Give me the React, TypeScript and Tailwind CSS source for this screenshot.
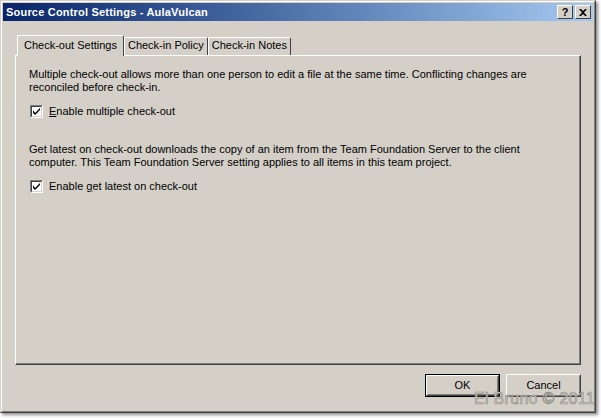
import React from 'react';

const font = { fontFamily: 'Tahoma, "Liberation Sans", Arial, sans-serif' };

function CheckBox() {
  return (
    <div className="w-[13px] h-[13px] border border-t-[#808080] border-l-[#808080] border-r-white border-b-white flex-shrink-0">
      <div className="w-full h-full bg-white border border-t-[#404040] border-l-[#404040] border-r-[#d4d0c8] border-b-[#d4d0c8] flex items-center justify-center">
        <svg width="9" height="9" viewBox="0 0 9 9">
          <path d="M1 3v3l2 2 5-5V1L3 6z" fill="#000" />
        </svg>
      </div>
    </div>
  );
}

function Tab({ label, active }: { label: string; active?: boolean }) {
  if (active) {
    return (
      <div className="relative z-10 -mb-px h-[21px] px-[6px] pt-[3px] bg-[#d4d0c8] border-t border-l border-t-white border-l-white border-r border-r-[#404040] rounded-tl-[2px] rounded-tr-[2px] text-black">
        {label}
      </div>
    );
  }
  return (
    <div className="h-[18px] mt-[3px] px-[3px] pt-[1px] border-t border-l border-t-white border-l-white border-r border-r-[#404040] rounded-tr-[2px] text-black">
      {label}
    </div>
  );
}

function Button({ label, def }: { label: string; def?: boolean }) {
  return (
    <div className={`w-[75px] h-[23px] ${def ? 'border border-black' : ''}`}>
      <div className="w-full h-full border border-t-white border-l-white border-r-[#404040] border-b-[#404040]">
        <div className="w-full h-full border border-t-[#d4d0c8] border-l-[#d4d0c8] border-r-[#808080] border-b-[#808080] flex items-center justify-center text-black">
          {label}
        </div>
      </div>
    </div>
  );
}

export default function App() {
  return (
    <div className="w-[601px] h-[418px] bg-white overflow-hidden text-[11px] leading-[13px]" style={font}>
      <div className="relative w-[596px] h-[413px] border border-t-[#d4d0c8] border-l-[#d4d0c8] border-r-[#404040] border-b-[#404040] shadow-[2px_2px_3px_rgba(0,0,0,0.45)]">
        <div className="w-full h-full border border-t-white border-l-white border-r-[#808080] border-b-[#808080] bg-[#d4d0c8] p-px flex flex-col">
          {/* Title bar */}
          <div className="h-[18px] flex items-center bg-gradient-to-r from-[#0a246a] to-[#a6caf0] pl-[3px] pr-[2px]">
            <span className="text-white font-bold flex-1 tracking-[0.2px]">Source Control Settings - AulaVulcan</span>
            <div className="flex gap-[2px]">
              <div className="w-[16px] h-[14px] bg-[#d4d0c8] border border-t-white border-l-white border-r-[#404040] border-b-[#404040] flex items-center justify-center font-bold text-[11px] leading-none">
                ?
              </div>
              <div className="w-[16px] h-[14px] bg-[#d4d0c8] border border-t-white border-l-white border-r-[#404040] border-b-[#404040] flex items-center justify-center">
                <svg width="8" height="7" viewBox="0 0 8 7">
                  <path d="M0 0h2l2 2 2-2h2L5 3.5 8 7H6L4 5 2 7H0l3-3.5z" fill="#000" />
                </svg>
              </div>
            </div>
          </div>

          {/* Body */}
          <div className="flex-1 flex flex-col pt-[13px] pl-[12px] pr-[12px]">
            <div className="flex items-end pl-[2px] h-[21px]">
              <Tab label="Check-out Settings" active />
              <Tab label="Check-in Policy" />
              <Tab label="Check-in Notes" />
            </div>
            <div className="h-[310px] border border-t-white border-l-white border-r-[#404040] border-b-[#404040]">
              <div className="w-full h-full border-r border-b border-r-[#808080] border-b-[#808080] pl-[13px] pr-[10px] pt-[12px] text-black">
                <p>
                  Multiple check-out allows more than one person to edit a file at the same time. Conflicting changes are
                  reconciled before check-in.
                </p>
                <div className="flex items-center gap-[6px] mt-[11px] pl-px">
                  <CheckBox />
                  <span>
                    <u>E</u>nable multiple check-out
                  </span>
                </div>
                <p className="mt-[25px]">
                  Get latest on check-out downloads the copy of an item from the Team Foundation Server to the client
                  computer. This Team Foundation Server setting applies to all items in this team project.
                </p>
                <div className="flex items-center gap-[6px] mt-[11px] pl-px">
                  <CheckBox />
                  <span>
                    Enable <u>g</u>et latest on check-out
                  </span>
                </div>
              </div>
            </div>
            <div className="flex justify-end gap-[6px] mt-[9px] relative">
              <Button label="OK" def />
              <Button label="Cancel" />
              <span
                className="absolute right-[-14px] top-[17px] text-[16px] leading-none text-[#d4d0c8] tracking-[0.3px]"
                style={{ fontFamily: '"Liberation Sans", sans-serif', WebkitTextStroke: '0.6px #8a8880' }}
              >
                El Bruno © 2011
              </span>
            </div>
          </div>
        </div>
      </div>
    </div>
  );
}
